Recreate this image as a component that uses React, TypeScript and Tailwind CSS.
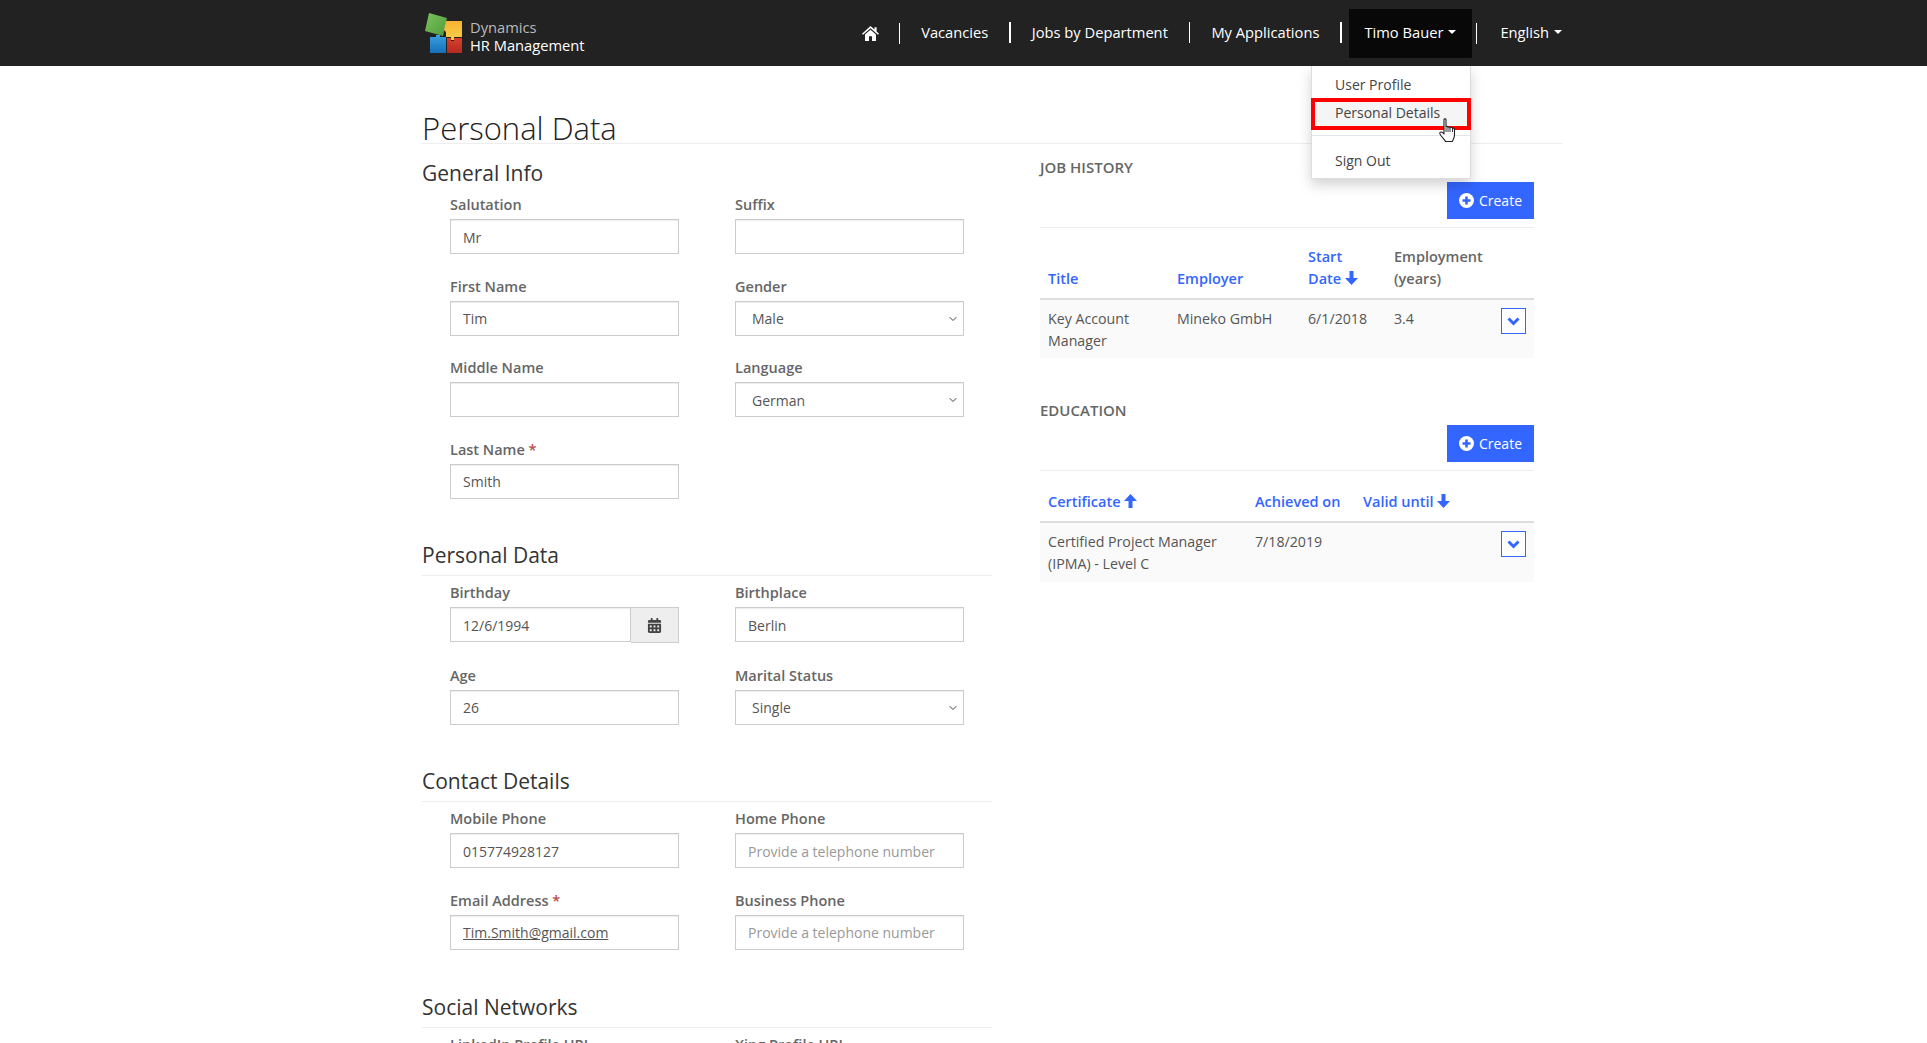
import { ChevronDown } from "lucide-react";
import { FaCalendarAlt } from "react-icons/fa";

// =============================================================================
// Icons
// =============================================================================

function Logo() {
    return (
        <svg width="42" height="42" viewBox="0 0 42 42" className="shrink-0">
            <defs>
                <linearGradient id="lg-green" x1="0" y1="0" x2="1" y2="1">
                    <stop offset="0" stopColor="#7cc35c" />
                    <stop offset="1" stopColor="#4f9a3c" />
                </linearGradient>
                <linearGradient id="lg-yellow" x1="0" y1="0" x2="0" y2="1">
                    <stop offset="0" stopColor="#f9b233" />
                    <stop offset="1" stopColor="#f6d04a" />
                </linearGradient>
                <linearGradient id="lg-blue" x1="0" y1="0" x2="0" y2="1">
                    <stop offset="0" stopColor="#3aa0e0" />
                    <stop offset="1" stopColor="#1670b8" />
                </linearGradient>
                <linearGradient id="lg-red" x1="0" y1="0" x2="0" y2="1">
                    <stop offset="0" stopColor="#d8402c" />
                    <stop offset="1" stopColor="#b32a22" />
                </linearGradient>
            </defs>
            <path d="M6 0 L24 5 L20 23 L2 18 Z" fill="url(#lg-green)" />
            <path d="M23 8 H39 V24 H31 V27 H28 V24 H23 V19 L21 17 Z" fill="url(#lg-yellow)" />
            <path d="M7 24 H13 V22 H17 V24 H23 V40 H7 Z" fill="url(#lg-blue)" />
            <path d="M24 25 H28 V28 H31 V25 H39 V40 H24 Z" fill="url(#lg-red)" />
        </svg>
    );
}

function HomeIcon() {
    return (
        <svg width="17" height="15" viewBox="0 0 17 15" fill="#fff">
            <path d="M8.5 0 L12.5 3.6 V1.2 H14.6 V5.5 L17 7.7 L16 8.8 L8.5 2.2 L1 8.8 L0 7.7 Z" />
            <path d="M3 8.6 L8.5 3.8 L14 8.6 V15 H10 V10.2 H7 V15 H3 Z" />
        </svg>
    );
}

function PlusCircle() {
    return (
        <svg width="15" height="15" viewBox="0 0 15 15">
            <circle cx="7.5" cy="7.5" r="7.5" fill="#fff" />
            <path d="M6.2 3.5 H8.8 V6.2 H11.5 V8.8 H8.8 V11.5 H6.2 V8.8 H3.5 V6.2 H6.2 Z" fill="#3366ff" />
        </svg>
    );
}

function SortArrow({ up = false }: { up?: boolean }) {
    return (
        <svg width="13" height="14" viewBox="0 0 13 14" fill="#3366ff" className={up ? "inline-block rotate-180 align-[-1px]" : "inline-block align-[-1px]"}>
            <path d="M4.5 0 H8.5 V7 H13 L6.5 14 L0 7 H4.5 Z" />
        </svg>
    );
}

function HandCursor() {
    return (
        <svg width="17" height="25" viewBox="0 0 17 25" className="absolute left-[1439px] top-[118px] z-20">
            <path
                d="M5 1.5 C5 .5 7 .5 7 1.5 V9 C7 8 9 8 9 9.5 C9 8.5 11 8.5 11 10 C11 9 13.5 9 13.5 10.5 C13.5 9.8 15.5 9.8 15.5 11.5 V17 C15.5 20 14 21 13.5 23.5 H6.5 C5.5 21 1 17.5 .8 15.5 C.6 13.5 3 13.5 5 16 Z"
                fill="#fff"
                stroke="#222"
                strokeWidth="1.1"
                strokeLinejoin="round"
            />
            <path d="M7 9.5 V14 M9 9.5 V14 M11 10 V14 M13.5 10.5 V14" stroke="#222" strokeWidth="0.9" fill="none" />
        </svg>
    );
}

// =============================================================================
// Form bits
// =============================================================================

interface FieldProps {
    label?: string;
    value?: string;
    required?: boolean;
    placeholder?: string;
    options?: string[];
    date?: boolean;
    link?: boolean;
}

const inputClass =
    "h-[35px] w-full border border-[#ccc] bg-white px-3 pt-px text-[14px] text-[#555] shadow-[inset_0_1px_1px_rgba(0,0,0,0.075)] outline-none placeholder:text-[#999]";

function Field({ label, value, required, placeholder, options, date, link }: FieldProps) {
    if (!label) return <div />;
    return (
        <div className="mb-[21.5px]">
            <div className="mb-[4px] h-[21px] text-[14.5px] leading-[21px] font-semibold text-[#666]">
                {label}
                {required && <span className="text-[#b94a48]"> *</span>}
            </div>
            {options ? (
                <div className="relative">
                    <select defaultValue={value} className={`${inputClass} appearance-none pl-[16px]`}>
                        {options.map((o) => (
                            <option key={o}>{o}</option>
                        ))}
                    </select>
                    <ChevronDown size={12} strokeWidth={2} className="pointer-events-none absolute right-[5px] top-[12px] text-[#444]" />
                </div>
            ) : date ? (
                <div className="flex">
                    <input readOnly defaultValue={value} className={inputClass} />
                    <span className="flex h-[36px] w-[48px] shrink-0 items-center justify-center border border-l-0 border-[#ccc] bg-[#eee] text-[#444]">
                        <FaCalendarAlt size={15} />
                    </span>
                </div>
            ) : (
                <input
                    readOnly
                    defaultValue={value}
                    placeholder={placeholder}
                    className={link ? `${inputClass} underline` : inputClass}
                />
            )}
        </div>
    );
}

function FieldGrid({ children }: { children: React.ReactNode }) {
    return <div className="grid grid-cols-[229px_229px] gap-x-[56px] pl-[28px]">{children}</div>;
}

function SectionTitle({ children }: { children: React.ReactNode }) {
    return (
        <h3 className="mb-[6px] h-[36px] border-b border-[#eee] text-[21px] leading-[31px] text-[#333]">
            {children}
        </h3>
    );
}

function RowToggle() {
    return (
        <button className="flex h-[26px] w-[25px] items-center justify-center border-[1.5px] border-[#3366ff] bg-white">
            <svg width="13" height="9" viewBox="0 0 13 9" fill="none" stroke="#3366ff" strokeWidth="3">
                <path d="M1.5 1.5 L6.5 6.5 L11.5 1.5" />
            </svg>
        </button>
    );
}

function PanelHeader({ title }: { title: string }) {
    return (
        <div className="border-b border-[#eee] pb-[8px]">
            <div className="h-[20px] text-[15px] leading-[20px] font-semibold text-[#666]">{title}</div>
            <div className="mt-[5px] flex justify-end">
                <button className="flex h-[37px] w-[87px] items-center justify-center gap-[5px] bg-[#3366ff] text-[14px] text-white">
                    <PlusCircle />
                    Create
                </button>
            </div>
        </div>
    );
}

const navLinks = ["Vacancies", "Jobs by Department", "My Applications"];

const navDivider = <span className="block h-[21px] w-[1.5px] shrink-0 bg-white" />;

// =============================================================================
// Page
// =============================================================================

export default function App() {
    return (
        <div className="relative h-[1043px] overflow-hidden bg-white font-['Open_Sans',sans-serif] text-[#555]">
            {/* Navbar */}
            <nav className="flex h-[66px] items-center bg-[#222] pl-[423px] pr-[365px] text-white">
                <div className="flex items-center gap-[5px] pt-[2px]">
                    <Logo />
                    <div className="pt-[3px] text-[14.7px] leading-[18px]">
                        <div className="text-[#bbb]">Dynamics</div>
                        <div>HR Management</div>
                    </div>
                </div>
                <div className="ml-auto flex items-center text-[14.7px]">
                    <HomeIcon />
                    <span className="ml-[20px]">{navDivider}</span>
                    {navLinks.map((link) => (
                        <div key={link} className="flex items-center">
                            <span className="px-[21px] pb-[2px]">{link}</span>
                            {navDivider}
                        </div>
                    ))}
                    <span className="ml-[7px] flex h-[49px] w-[123px] items-center justify-center gap-[5px] bg-[#080808] pb-[2px]">
                        Timo Bauer
                        <span className="h-0 w-0 border-x-[4px] border-t-[4px] border-x-transparent border-t-white" />
                    </span>
                    <span className="ml-[4px]">{navDivider}</span>
                    <span className="ml-[23px] flex items-center gap-[5px] pb-[2px]">
                        English
                        <span className="h-0 w-0 border-x-[4px] border-t-[4px] border-x-transparent border-t-white" />
                    </span>
                </div>
            </nav>

            {/* User dropdown */}
            <div className="absolute left-[1311px] top-[66px] z-10 h-[113px] w-[160px] border border-t-0 border-[#ddd] bg-white pt-[8px] text-[14px] text-[#444] shadow-[0_6px_12px_rgba(0,0,0,0.175)]">
                <div className="px-[23px] leading-[22px]">User Profile</div>
                <div className="-mx-px mt-[2px] h-[32px] border-[4px] border-[#ff0000] bg-[#f5f5f5] pl-[20px] leading-[22px]">Personal Details</div>
                <div className="mt-[5px] h-px bg-[#e5e5e5]" />
                <div className="mt-[14px] px-[23px] leading-[22px]">Sign Out</div>
            </div>
            <HandCursor />

            {/* Main */}
            <main className="ml-[422px] w-[1140px] pt-[39px]">
                <h1 className="h-[39px] border-b border-[#eee] text-[31px] leading-[46px] font-light text-[#222]">
                    Personal Data
                </h1>

                <div className="flex gap-[48px]">
                    {/* Left column */}
                    <div className="w-[570px] shrink-0">
                        <h3 className="mt-[14px] mb-[6px] text-[21px] leading-[30px] text-[#333]">General Info</h3>
                        <FieldGrid>
                            <Field label="Salutation" value="Mr" />
                            <Field label="Suffix" />
                            <Field label="First Name" value="Tim" />
                            <Field label="Gender" value="Male" options={["Male", "Female"]} />
                            <Field label="Middle Name" />
                            <Field label="Language" value="German" options={["German", "English"]} />
                            <Field label="Last Name" value="Smith" required />
                        </FieldGrid>

                        <div className="mt-[20px]">
                            <SectionTitle>Personal Data</SectionTitle>
                            <FieldGrid>
                                <Field label="Birthday" value="12/6/1994" date />
                                <Field label="Birthplace" value="Berlin" />
                                <Field label="Age" value="26" />
                                <Field label="Marital Status" value="Single" options={["Single", "Married"]} />
                            </FieldGrid>
                        </div>

                        <div className="mt-[20px]">
                            <SectionTitle>Contact Details</SectionTitle>
                            <FieldGrid>
                                <Field label="Mobile Phone" value="015774928127" />
                                <Field label="Home Phone" placeholder="Provide a telephone number" />
                                <Field label="Email Address" value="Tim.Smith@gmail.com" required link />
                                <Field label="Business Phone" placeholder="Provide a telephone number" />
                            </FieldGrid>
                        </div>

                        <div className="mt-[21px]">
                            <SectionTitle>Social Networks</SectionTitle>
                            <FieldGrid>
                                <Field label="LinkedIn Profile URL" />
                                <Field label="Xing Profile URL" />
                            </FieldGrid>
                        </div>
                    </div>

                    {/* Right column */}
                    <div className="w-[494px] shrink-0 pt-[13px] text-[14.2px] leading-[22px]">
                        <PanelHeader title="JOB HISTORY" />
                        <div className="mt-[18px] grid grid-cols-[129px_131px_86px_1fr] items-end gap-0 border-b-2 border-[#ddd] px-[8px] pb-[8px] text-[14.5px] font-semibold text-[#3366ff]">
                            <span>Title</span>
                            <span>Employer</span>
                            <span>
                                Start
                                <br />
                                Date <SortArrow />
                            </span>
                            <span className="text-[#666]">
                                Employment
                                <br />
                                (years)
                            </span>
                        </div>
                        <div className="grid h-[58px] grid-cols-[129px_131px_86px_1fr] bg-[#fafafa] px-[8px] pt-[8px]">
                            <span>
                                Key Account
                                <br />
                                Manager
                            </span>
                            <span>Mineko GmbH</span>
                            <span>6/1/2018</span>
                            <span className="flex items-start justify-between">
                                3.4
                                <RowToggle />
                            </span>
                        </div>

                        <div className="mt-[42px]">
                            <PanelHeader title="EDUCATION" />
                        </div>
                        <div className="mt-[20px] grid grid-cols-[207px_108px_1fr] border-b-2 border-[#ddd] px-[8px] pb-[8px] text-[14.5px] font-semibold text-[#3366ff]">
                            <span>
                                Certificate <SortArrow up />
                            </span>
                            <span>Achieved on</span>
                            <span>
                                Valid until <SortArrow />
                            </span>
                        </div>
                        <div className="grid h-[59px] grid-cols-[207px_108px_1fr] bg-[#fafafa] px-[8px] pt-[8px]">
                            <span>
                                Certified Project Manager
                                <br />
                                (IPMA) - Level C
                            </span>
                            <span>7/18/2019</span>
                            <span className="flex justify-end">
                                <RowToggle />
                            </span>
                        </div>
                    </div>
                </div>
            </main>
        </div>
    );
}
